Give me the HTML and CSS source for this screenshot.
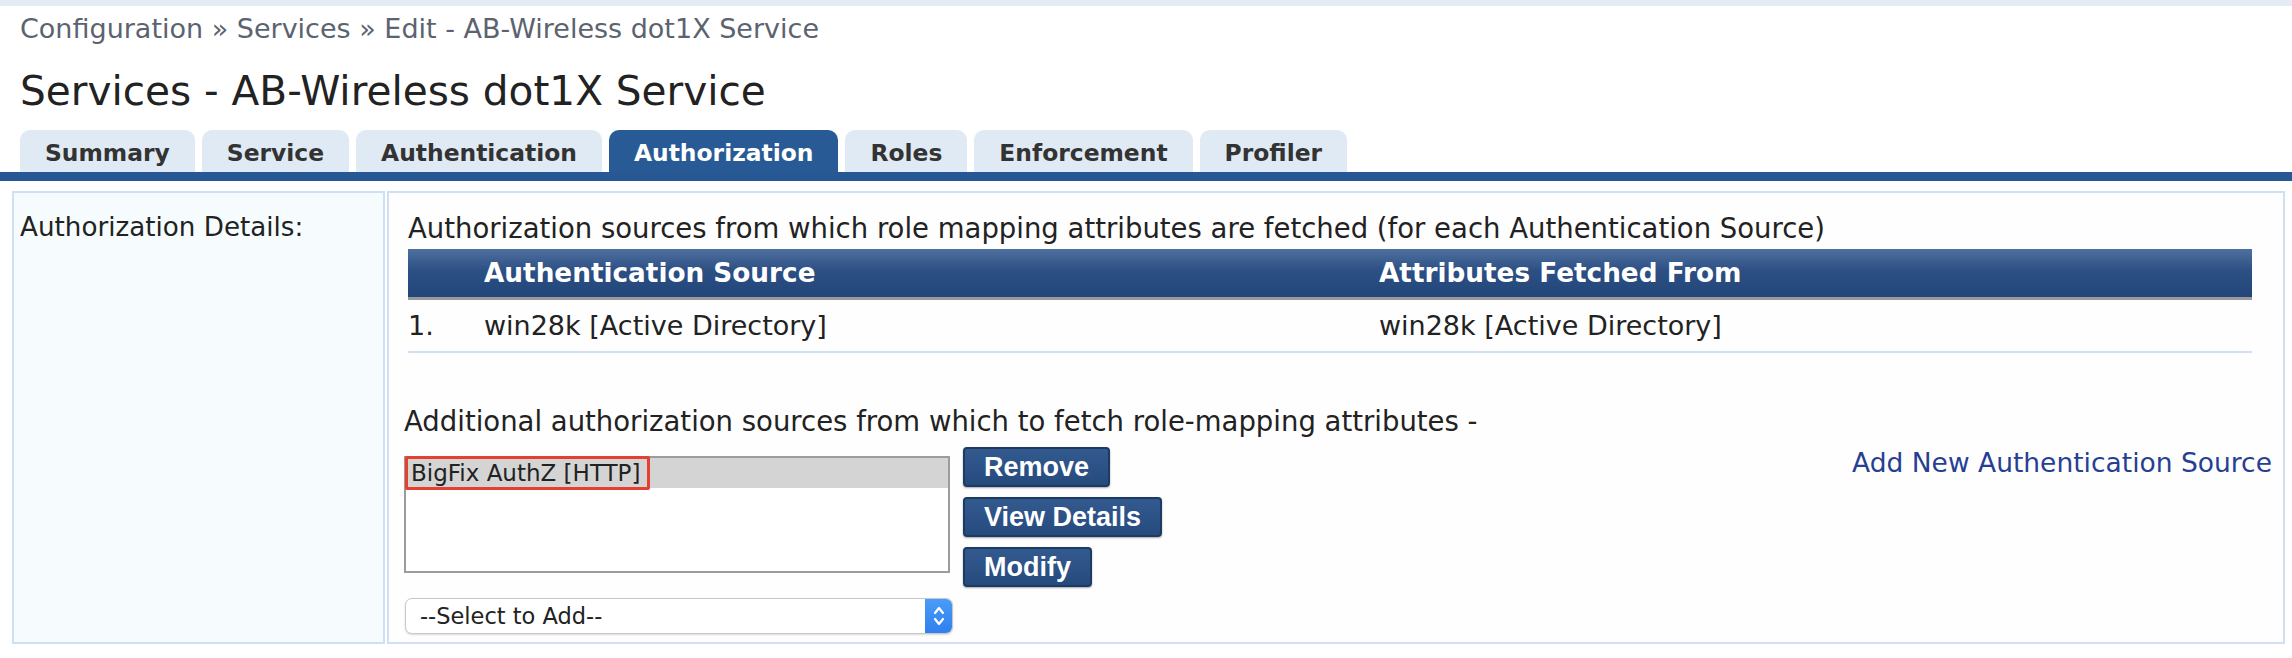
FILE: index.html
```html
<!DOCTYPE html>
<html lang="en">
  <head>
    <meta charset="UTF-8" />
    <title>Services - AB-Wireless dot1X Service</title>
    <link rel="stylesheet" href="styles.css">
  </head>
  <body>
    <div class="topband"></div>
    <div class="breadcrumb">Configuration &raquo; Services &raquo; Edit - AB-Wireless dot1X Service</div>
    <h1 class="title">Services - AB-Wireless dot1X Service</h1>

    <div class="tabs">
      <div class="tab">Summary</div>
      <div class="tab">Service</div>
      <div class="tab">Authentication</div>
      <div class="tab active">Authorization</div>
      <div class="tab">Roles</div>
      <div class="tab">Enforcement</div>
      <div class="tab">Profiler</div>
    </div>
    <div class="tabbar"></div>

    <div class="content">
      <div class="label-col">Authorization Details:</div>
      <div class="main-col">
        <div class="intro">Authorization sources from which role mapping attributes are fetched (for each Authentication Source)</div>
        <table class="grid">
          <thead>
            <tr>
              <th class="num"></th>
              <th class="src">Authentication Source</th>
              <th>Attributes Fetched From</th>
            </tr>
          </thead>
          <tbody>
            <tr>
              <td class="num">1.</td>
              <td class="src">win28k [Active Directory]</td>
              <td>win28k [Active Directory]</td>
            </tr>
          </tbody>
        </table>

        <div class="additional">Additional authorization sources from which to fetch role-mapping attributes -</div>
        <div class="addrow">
          <div class="listbox">
            <div class="option selected"><span class="marked">BigFix AuthZ [HTTP]</span></div>
          </div>
          <div class="btns">
            <button class="btn">Remove</button>
            <button class="btn">View Details</button>
            <button class="btn">Modify</button>
          </div>
          <a class="addlink" href="#">Add New Authentication Source</a>
        </div>
        <div class="select">
          <span class="select-text">--Select to Add--</span>
          <span class="stepper">
            <svg width="14" height="26" viewBox="0 0 14 26">
              <path d="M3 10 L7 5 L11 10" fill="none" stroke="#fff" stroke-width="2.2" stroke-linecap="round" stroke-linejoin="round"/>
              <path d="M3 16 L7 21 L11 16" fill="none" stroke="#fff" stroke-width="2.2" stroke-linecap="round" stroke-linejoin="round"/>
            </svg>
          </span>
        </div>
      </div>
    </div>
  </body>
</html>
```

FILE: styles.css
```css
body {
  margin: 0;
  background-color: #fff;
  font-family: "DejaVu Sans", Verdana, sans-serif;
  font-size: 27.5px;
  color: #222;
}
.topband {
  height: 6px;
  background-color: #e4ebf3;
}
.breadcrumb {
  margin: 7px 0 0 20px;
  font-size: 27px;
  line-height: 32px;
  color: #5b6370;
}
.title {
  margin: 22px 0 0 20px;
  font-size: 40.6px;
  font-weight: normal;
  line-height: 48px;
  color: #222;
}
.tabs {
  display: flex;
  gap: 7px;
  margin: 15px 0 0 20px;
}
.tab {
  height: 42px;
  line-height: 46px;
  padding: 0 25px;
  background-color: #e0eaf4;
  border-radius: 10px 10px 0 0;
  font-size: 23.4px;
  font-weight: bold;
  color: #333;
}
.tab.active {
  background-color: #285a96;
  color: #fff;
}
.tabbar {
  height: 9px;
  background-color: #275893;
}
.content {
  display: flex;
  gap: 2px;
  margin: 10px 7px 0 12px;
}
.label-col {
  width: 363px;
  padding: 19px 0 0 6px;
  border: 2px solid #cfe0f3;
  background-color: #f6fcfe;
  font-size: 26.2px;
}
.main-col {
  flex: 1;
  padding: 19px 31px 8px 19px;
  border: 2px solid #cfe0f3;
  background-color: #fefeff;
}
.intro {
  line-height: 32px;
}
.grid {
  width: 100%;
  margin-top: 5px;
  border-collapse: collapse;
}
.grid th {
  height: 48px;
  padding: 0;
  text-align: left;
  color: #fff;
  font-size: 26.3px;
  font-weight: bold;
  background: linear-gradient(#4f709f, #2c4f84 45%, #22457a);
  border-bottom: 3px solid #9a9a9a;
}
.grid td {
  height: 51px;
  padding: 0;
  font-size: 27px;
  border-bottom: 2px solid #cfe0f3;
}
.grid .num {
  width: 76px;
}
.grid .src {
  width: 895px;
}
.additional {
  margin: 52px 0 0 -4px;
  line-height: 32px;
}
.addrow {
  display: flex;
  align-items: flex-start;
  margin: 10px 0 0 -4px;
}
.listbox {
  width: 542px;
  height: 113px;
  margin-top: 9px;
  border: 2px solid #9c9c9c;
  background-color: #fff;
}
.option {
  height: 30px;
  line-height: 30px;
  font-size: 23px;
}
.option.selected {
  background-color: #d4d4d4;
}
.marked {
  display: inline-block;
  height: 28px;
  line-height: 28px;
  margin-top: -2px;
  margin-left: -1px;
  padding: 0 7px 0 3px;
  border: 3px solid #e5402f;
  border-radius: 2px;
}
.btns {
  display: flex;
  flex-direction: column;
  align-items: flex-start;
  gap: 10px;
  margin-left: 13px;
}
.btn {
  height: 40px;
  padding: 0 19px;
  border: 2px solid #1d3a63;
  border-radius: 4px;
  background: linear-gradient(#335a8f, #254a7e);
  box-shadow: 0 1px 2px rgba(0, 0, 0, 0.35);
  color: #fff;
  font-family: "Liberation Sans", Arial, sans-serif;
  font-size: 27px;
  font-weight: bold;
  cursor: pointer;
}
.addlink {
  margin: 0 -20px 0 auto;
  font-size: 26.5px;
  line-height: 32px;
  color: #273f93;
  text-decoration: none;
}
.select {
  display: flex;
  align-items: center;
  width: 546px;
  height: 34px;
  margin: 11px 0 0 -3px;
  border: 1px solid #c8c8c8;
  border-radius: 7px;
  background-color: #fff;
  box-shadow: 0 1px 2px rgba(0, 0, 0, 0.15);
  overflow: hidden;
}
.select-text {
  flex: 1;
  padding-left: 14px;
  font-size: 22.5px;
}
.stepper {
  display: flex;
  align-items: center;
  justify-content: center;
  width: 27px;
  height: 100%;
  background: linear-gradient(#4a9cf8, #2f7fef);
}
```
